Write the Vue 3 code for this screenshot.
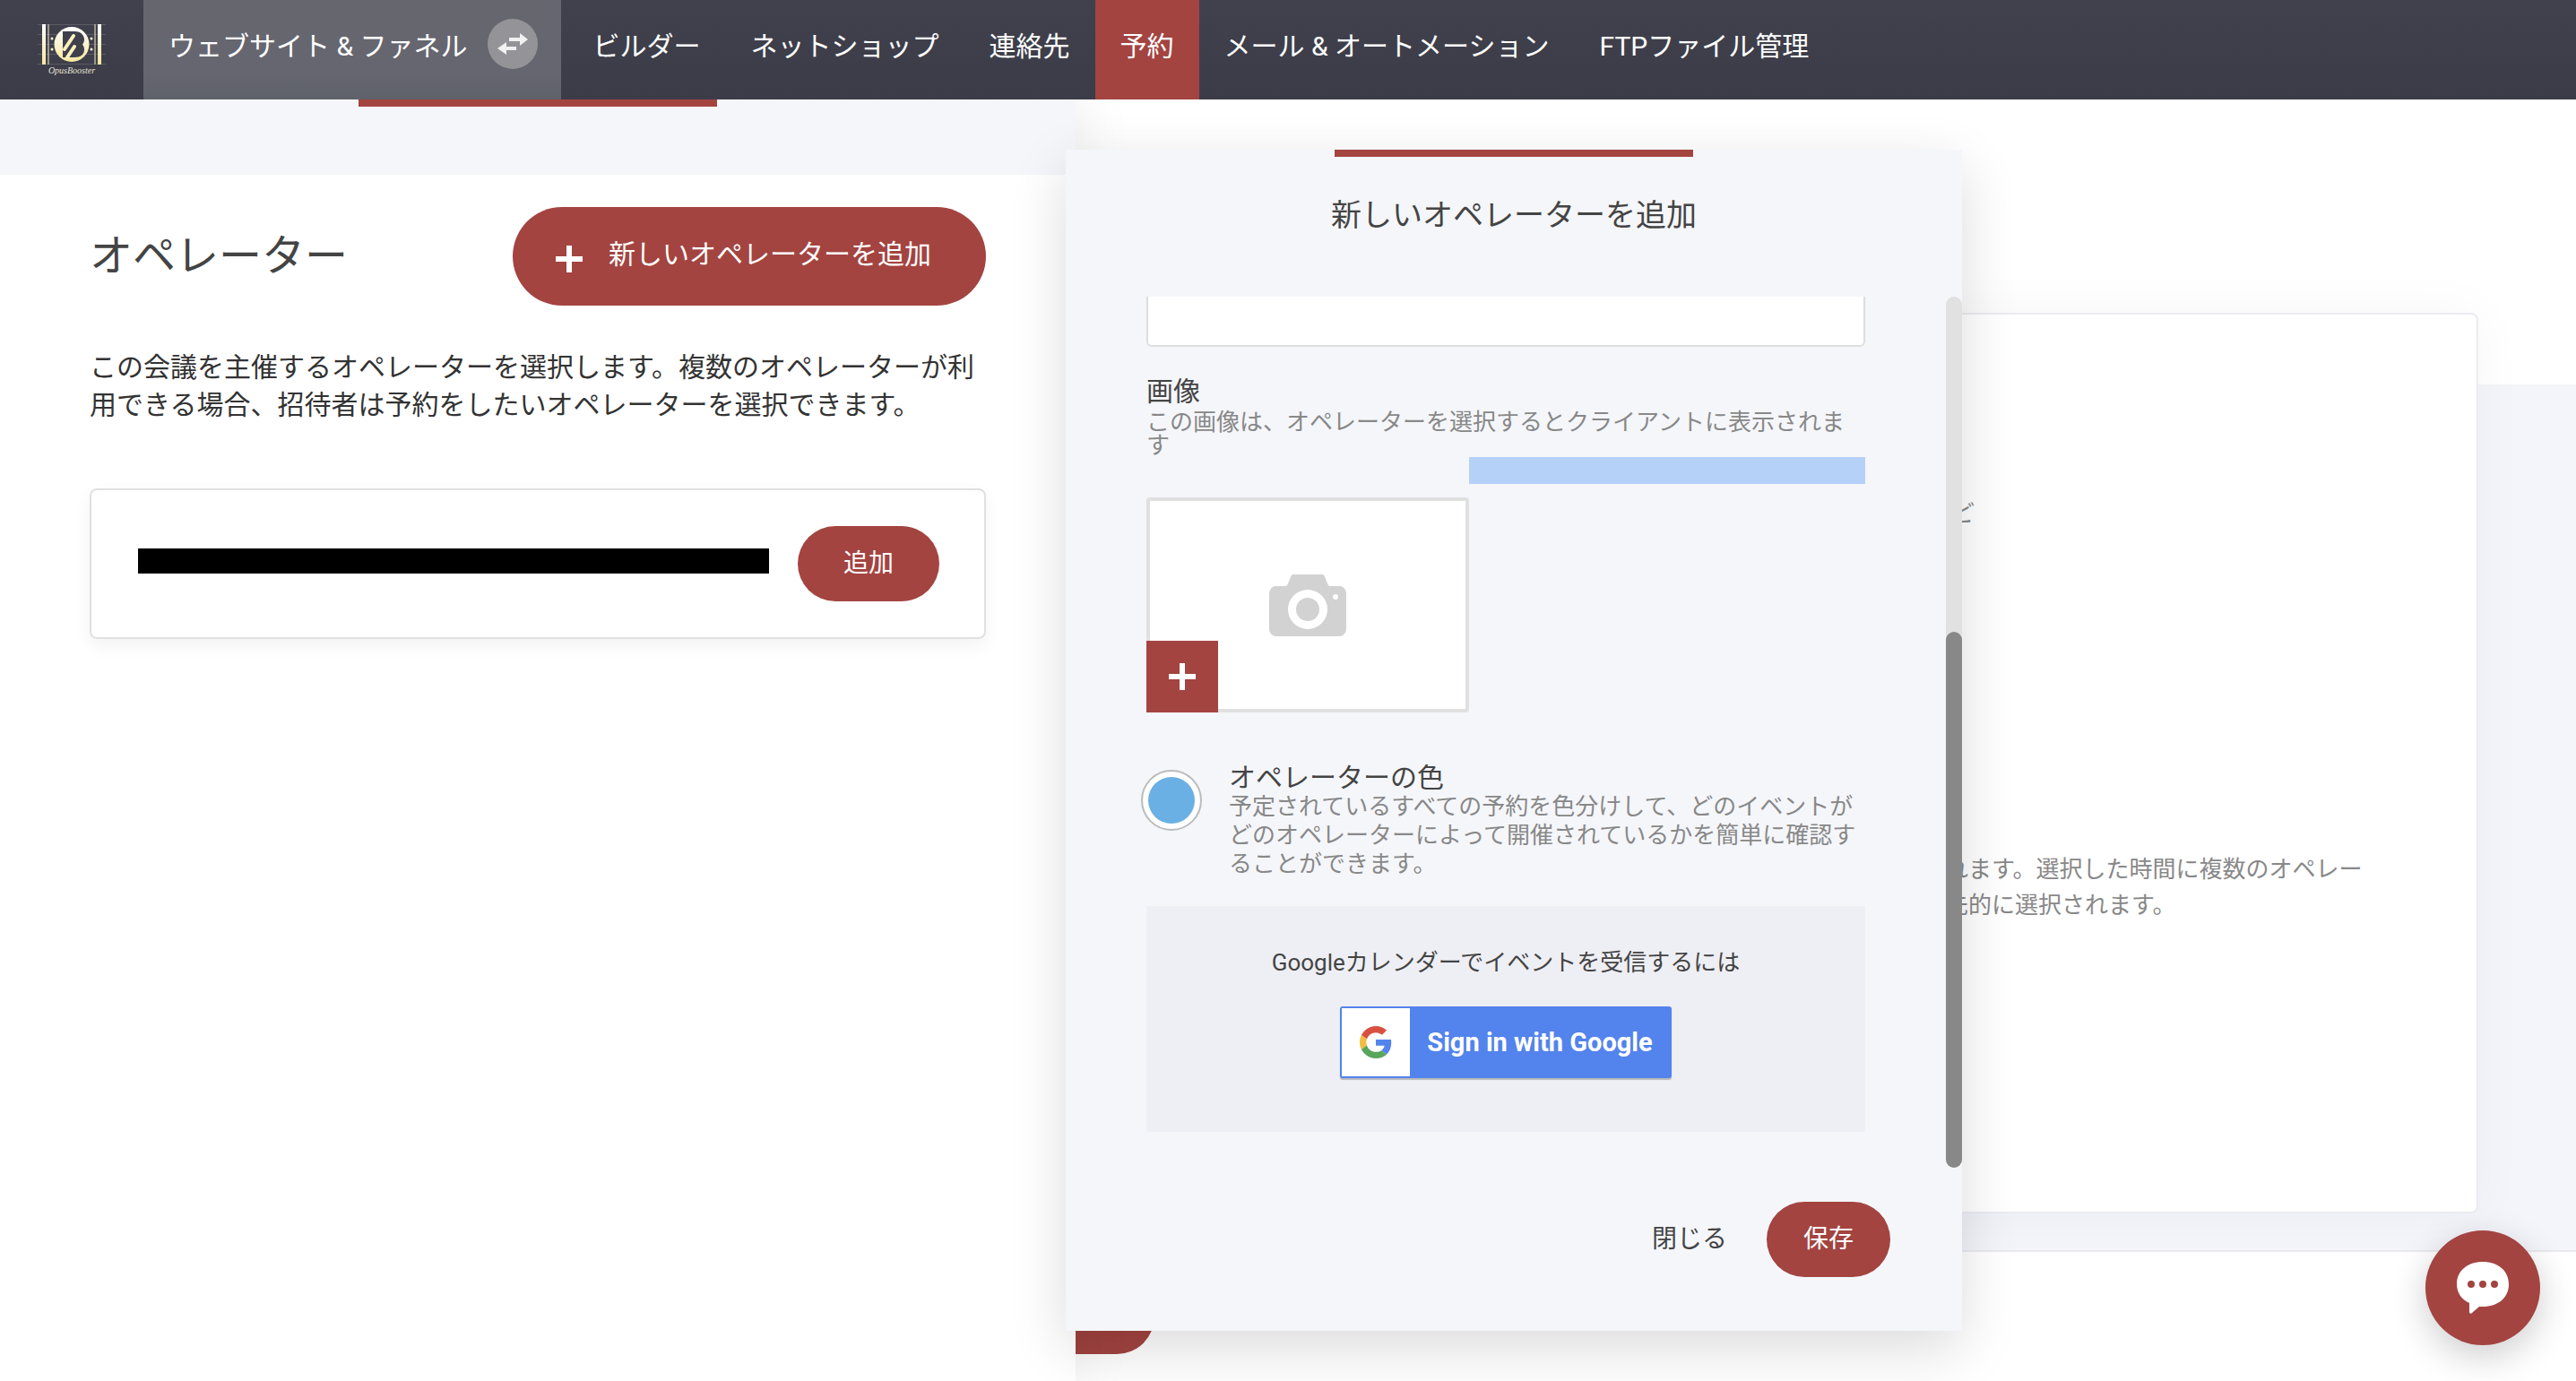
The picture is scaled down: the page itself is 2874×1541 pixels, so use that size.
<script setup>
import { ref } from 'vue'

const navItems = [
  { label: 'ビルダー' },
  { label: 'ネットショップ' },
  { label: '連絡先' },
  { label: '予約', active: true },
  { label: 'メール & オートメーション' },
  { label: 'FTPファイル管理' },
]

const operatorName = ref('')
const operatorColor = ref('#6bb0e4')
</script>

<template>
  <div class="page">
    <header class="topbar">
      <a href="#" class="logo" aria-label="OpusBooster">
        <svg width="80" height="64" viewBox="0 0 80 64">
          <defs>
            <linearGradient id="gold" x1="0" y1="0" x2="0" y2="1">
              <stop offset="0" stop-color="#ffffff" />
              <stop offset="1" stop-color="#f7e7a0" />
            </linearGradient>
          </defs>
          <g stroke="#5a5b62" stroke-width="1">
            <path d="M2 7.500h76M2 18.500h76M2 29.500h76M2 40.500h76M2 51.500h76" />
          </g>
          <g fill="url(#gold)">
            <rect x="7" y="7" width="4" height="45" />
            <rect x="69" y="7" width="4" height="45" />
          </g>
          <path d="M14 7v45M66 7v45" stroke="#b9b59f" stroke-width="1.500" />
          <g fill="#fdf5cf">
            <circle cx="18" cy="23" r="1.500" /><circle cx="18" cy="35" r="1.500" />
            <circle cx="62" cy="23" r="1.500" /><circle cx="62" cy="35" r="1.500" />
          </g>
          <circle cx="40" cy="29.500" r="19.500" fill="url(#gold)" />
          <path d="M30 15h13c8 0 11 5 11 9 0 3-1 4-2 5.500 1 1.500 2 3 2 6 0 5-4 8.500-11 8.500H30z" fill="#3f404b" />
          <path d="M42 20 32 35M43 32 35 44" stroke="#fbf0bf" stroke-width="4" stroke-linecap="round" />
          <text x="40" y="62" text-anchor="middle" class="logo-name">OpusBooster</text>
        </svg>
      </a>
      <a href="#" class="site-switch">
        <span>ウェブサイト &amp; ファネル</span>
        <span class="swap">
          <svg width="34" height="26" viewBox="0 0 34 26" fill="#f1f1f2">
            <path d="M13 6h12V1l9 7-9 7v-5H13zM21 16H10v-5L0 18l10 7v-5h11z" />
          </svg>
        </span>
      </a>
      <nav class="nav">
        <a v-for="item in navItems" :key="item.label" href="#" class="nav-item" :class="{ active: item.active }">{{ item.label }}</a>
      </nav>
    </header>

    <div class="content">
      <aside class="panel">
        <div class="panel-top"><div class="accent"></div></div>
        <div class="panel-body">
          <div class="panel-head">
            <h1>オペレーター</h1>
            <button type="button" class="btn btn-large">
              <svg width="30" height="30" viewBox="0 0 30 30"><path d="M15 0v30M0 15h30" stroke="#fff" stroke-width="6" /></svg>
              <span>新しいオペレーターを追加</span>
            </button>
          </div>
          <p class="intro">この会議を主催するオペレーターを選択します。複数のオペレーターが利用できる場合、招待者は予約をしたいオペレーターを選択できます。</p>
          <div class="operator">
            <div class="redacted"></div>
            <button type="button" class="btn btn-add">追加</button>
          </div>
        </div>
      </aside>

      <main class="main">
        <section class="band">
          <div class="settings">
            <p class="note note-short">ど</p>
            <p class="note note-long">れます。選択した時間に複数のオペレー<br>先的に選択されます。</p>
          </div>
        </section>
        <button type="button" class="btn btn-behind" aria-label="戻る"></button>

        <div class="modal" role="dialog" aria-labelledby="modal-title">
          <div class="modal-head">
            <div class="accent"></div>
            <h2 id="modal-title">新しいオペレーターを追加</h2>
          </div>
          <div class="modal-body">
            <div class="form">
              <input v-model="operatorName" type="text" class="text-input" aria-label="オペレーター">
              <h3 class="image-title">画像</h3>
              <p class="hint image-hint">この画像は、オペレーターを選択するとクライアントに表示されます</p>
              <div class="highlight"></div>
              <div class="image-box">
                <svg class="camera" width="88" height="72" viewBox="0 0 88 72">
                  <path d="M8 15h12c3-2 4-11 7-13h34c3 1 4 11 7 13h12a8 8 0 0 1 7 8v40a8 8 0 0 1-8 8H9a8 8 0 0 1-8-8V23a8 8 0 0 1 7-8z" fill="#d2d2d2" />
                  <circle cx="44" cy="41" r="22" fill="#fff" />
                  <circle cx="44" cy="41" r="13" fill="#d2d2d2" />
                  <circle cx="75" cy="27" r="3" fill="#fff" />
                </svg>
                <button type="button" class="image-add" aria-label="画像を追加">
                  <svg width="30" height="30" viewBox="0 0 30 30"><path d="M15 0v30M0 15h30" stroke="#fff" stroke-width="6" /></svg>
                </button>
              </div>
              <div class="color-row">
                <input id="operator-color" v-model="operatorColor" type="color" class="color-input">
                <div class="color-text">
                  <label for="operator-color">オペレーターの色</label>
                  <p class="hint color-hint">予定されているすべての予約を色分けして、どのイベントがどのオペレーターによって開催されているかを簡単に確認することができます。</p>
                </div>
              </div>
              <div class="google-box">
                <p>Googleカレンダーでイベントを受信するには</p>
                <button type="button" class="google-btn">
                  <span class="google-icon">
                    <svg width="36" height="36" viewBox="0 0 48 48">
                      <path fill="#d85140" d="M24 9.500c3.540 0 6.710 1.220 9.210 3.600l6.850-6.850C35.900 2.380 30.470 0 24 0 14.620 0 6.510 5.380 2.560 13.220l7.980 6.190C12.430 13.720 17.740 9.500 24 9.500z" />
                      <path fill="#5383ec" d="M46.980 24.550c0-1.570-.15-3.090-.38-4.550H24v9.020h12.940c-.58 2.960-2.260 5.480-4.780 7.180l7.730 6c4.510-4.180 7.090-10.360 7.090-17.650z" />
                      <path fill="#f1be42" d="M10.530 28.590c-.48-1.450-.76-2.990-.76-4.590s.27-3.140.76-4.590l-7.980-6.190C.92 16.460 0 20.120 0 24c0 3.880.92 7.540 2.560 10.780l7.970-6.190z" />
                      <path fill="#58a55c" d="M24 48c6.480 0 11.930-2.130 15.890-5.810l-7.730-6c-2.150 1.450-4.920 2.300-8.160 2.300-6.260 0-11.570-4.220-13.470-9.910l-7.980 6.190C6.510 42.620 14.620 48 24 48z" />
                    </svg>
                  </span>
                  <span class="google-label">Sign in with Google</span>
                </button>
              </div>
            </div>
            <div class="scrollbar"><div class="thumb"></div></div>
          </div>
          <div class="modal-foot">
            <button type="button" class="btn-close">閉じる</button>
            <button type="button" class="btn btn-save">保存</button>
          </div>
        </div>
      </main>
    </div>

    <button type="button" class="chat" aria-label="チャット">
      <svg width="60" height="60" viewBox="0 0 60 60">
        <path d="M30 1c17 0 29 10 29 25S47 51 30 51c-1 0-3 0-4 0l-8 7c-1 1-3 1-3-1V47C6 43 1 35 1 26 1 11 13 1 30 1z" fill="#fff" />
        <g fill="#a34441"><circle cx="17" cy="26" r="4" /><circle cx="30" cy="26" r="4" /><circle cx="43" cy="26" r="4" /></g>
      </svg>
    </button>
  </div>
</template>

<style>
body {
  background: #fff;
}
</style>

<style scoped>
.page {
  min-height: 100vh;
  display: flex;
  flex-direction: column;
  font-family: Roboto, "Noto Sans CJK JP", sans-serif;
  font-size: 30px;
  color: #333;
}
h1, h2, h3, p {
  margin: 0;
  font-weight: 400;
}
button, input {
  font-family: inherit;
  padding: 0;
  border: 0;
  margin: 0;
}
a {
  color: #fff;
  text-decoration: none;
}

.topbar {
  display: flex;
  height: 111px;
  background: linear-gradient(#40414c, #3c3c49);
  line-height: 104px;
  white-space: nowrap;
}
.logo {
  width: 160px;
  display: flex;
  justify-content: center;
  align-items: flex-start;
  padding-top: 20px;
  box-sizing: border-box;
}
.logo-name {
  font: italic 10px "Liberation Serif", serif;
  fill: #e6e2d2;
}
.site-switch {
  display: flex;
  gap: 22px;
  padding: 0 26px 0 28px;
  margin-right: 8px;
  background: linear-gradient(#66666f, #666670 70%, #5f626b);
}
.swap {
  width: 56px;
  height: 56px;
  margin-top: 21px;
  border-radius: 50%;
  background: #939398;
  display: flex;
  align-items: center;
  justify-content: center;
}
.nav {
  display: flex;
}
.nav-item {
  padding: 0 28px;
}
.nav-item.active {
  background: #a34441;
}

.content {
  flex: 1;
  display: grid;
  grid-template-columns: 1200fr 1674fr;
}
.panel {
  position: relative;
  z-index: 1;
  background: #fff;
  box-shadow: 0 0 60px rgba(0, 0, 0, 0.1);
  clip-path: inset(0 -80px 0 0);
}
.panel-top {
  height: 84px;
  background: #f5f6fa;
}
.accent {
  width: 400px;
  height: 8px;
  margin: 0 auto;
  background: #a34441;
}
.panel-body {
  padding: 36px 100px;
}
.panel-head {
  display: flex;
  justify-content: space-between;
  align-items: center;
}
h1 {
  font-size: 48px;
  line-height: 64px;
  color: #444;
}
.btn {
  background: #a34441;
  color: #fff;
  border-radius: 55px;
  font-size: 28px;
  line-height: 84px;
}
.btn-large {
  display: flex;
  align-items: center;
  gap: 29px;
  padding: 0 61px 4px 48px;
  font-size: 30px;
  line-height: 106px;
}
.btn-large svg {
  margin-top: 10px;
}
.intro {
  margin-top: 48px;
  line-height: 42px;
}
.operator {
  margin-top: 72px;
  display: flex;
  align-items: center;
  gap: 32px;
  padding: 40px 50px 40px 52px;
  border: 2px solid #e0e0e0;
  border-radius: 8px;
  box-shadow: 0 8px 20px rgba(0, 0, 0, 0.05);
}
.redacted {
  flex: 1;
  height: 28px;
  margin-bottom: 6px;
  background: #000;
}
.btn-add {
  width: 158px;
}

.main {
  position: relative;
}
.band {
  display: flow-root;
  margin-top: 318px;
  padding: 0 109px 41px 110px;
  background: #f4f5fa;
  border-bottom: 2px solid #e9e9ef;
}
.settings {
  margin-top: -80px;
  min-height: 1005px;
  box-sizing: border-box;
  padding: 202px 20px 0 858px;
  background: #fff;
  border: 2px solid #ebebf2;
  border-radius: 8px;
  box-shadow: 0 0 60px rgba(0, 0, 0, 0.04);
}
.note {
  font-size: 26px;
  line-height: 40px;
  color: #888;
}
.note-short {
  padding-left: 7px;
}
.note-long {
  margin-top: 357px;
}
.btn-behind {
  display: block;
  width: 138px;
  height: 84px;
  margin: 30px 0 30px -50px;
}

.modal {
  position: absolute;
  z-index: 2;
  left: -11px;
  top: 56px;
  bottom: 56px;
  width: 1000px;
  display: flex;
  flex-direction: column;
  background: #f5f6fa;
  box-shadow: 0 20px 60px rgba(0, 0, 0, 0.14);
}
.modal-head {
  height: 164px;
}
h2 {
  margin-top: 41px;
  font-size: 34px;
  line-height: 48px;
  text-align: center;
  color: #444;
}
.modal-body {
  flex: 1;
  min-height: 0;
  display: flex;
}
.form {
  flex: 1;
  display: flex;
  flex-direction: column;
  justify-content: flex-end;
  overflow: hidden;
  padding: 0 90px 40px;
}
.form > * {
  flex-shrink: 0;
}
.text-input {
  height: 84px;
  box-sizing: border-box;
  padding: 0 20px;
  border: 2px solid #dcdddd;
  border-radius: 6px;
  background: #fff;
  font-size: 28px;
}
.image-title {
  margin-top: 32px;
  font-size: 30px;
  line-height: 36px;
  color: #444;
}
.hint {
  font-size: 26px;
  color: #888;
}
.image-hint {
  margin-top: 3px;
  line-height: 26px;
}
.highlight {
  height: 30px;
  margin-left: 360px;
  background: #b5d1f8;
}
.image-box {
  position: relative;
  width: 360px;
  height: 240px;
  box-sizing: border-box;
  margin-top: 15px;
  border: 4px solid #e0e0e0;
  border-radius: 4px;
  background: #fff;
  display: flex;
  align-items: center;
  justify-content: center;
}
.image-add {
  position: absolute;
  left: -4px;
  bottom: -4px;
  width: 80px;
  height: 80px;
  background: #a34441;
  display: flex;
  align-items: center;
  justify-content: center;
}
.color-row {
  display: flex;
  gap: 30px;
  margin-top: 57px;
}
.color-input {
  appearance: none;
  flex: none;
  width: 68px;
  height: 68px;
  box-sizing: border-box;
  margin: 7px 0 0 -6px;
  padding: 6px;
  border: 2px solid #bbb;
  border-radius: 50%;
  background: #fff;
}
.color-input::-webkit-color-swatch-wrapper {
  padding: 0;
}
.color-input::-webkit-color-swatch {
  border: 0;
  border-radius: 50%;
}
.color-text {
  flex: 1;
}
.color-text label {
  display: block;
  line-height: 32px;
  color: #444;
}
.color-hint {
  line-height: 32px;
}
.google-box {
  margin-top: 31px;
  padding: 47px 0 60px;
  background: #eeeff4;
  display: flex;
  flex-direction: column;
  align-items: center;
  gap: 33px;
}
.google-box p {
  font-size: 26px;
  line-height: 32px;
  color: #444;
}
.google-btn {
  display: flex;
  width: 370px;
  height: 80px;
  box-sizing: border-box;
  padding: 2px;
  border-radius: 3px;
  background: #5383ec;
  box-shadow: 0 2px 1px #b5b6bc;
  color: #fff;
}
.google-icon {
  width: 76px;
  height: 76px;
  background: #fff;
  display: flex;
  align-items: center;
  justify-content: center;
}
.google-label {
  flex: 1;
  font-size: 29px;
  font-weight: 700;
  line-height: 76px;
}
.scrollbar {
  width: 18px;
  border-radius: 9px;
  background: #e1e1e1;
  display: flex;
  align-items: flex-end;
}
.thumb {
  width: 100%;
  height: 61.5%;
  border-radius: 9px;
  background: #888;
}
.modal-foot {
  display: flex;
  justify-content: flex-end;
  align-items: center;
  gap: 44px;
  padding: 38px 80px 60px;
}
.btn-close {
  background: none;
  font-size: 28px;
  line-height: 84px;
  color: #444;
}
.btn-save {
  width: 138px;
}

.chat {
  position: fixed;
  z-index: 3;
  right: 40px;
  bottom: 40px;
  width: 128px;
  height: 128px;
  border-radius: 50%;
  background: #a34441;
  box-shadow: 0 12px 40px rgba(0, 0, 0, 0.2);
  display: flex;
  align-items: center;
  justify-content: center;
}
</style>
